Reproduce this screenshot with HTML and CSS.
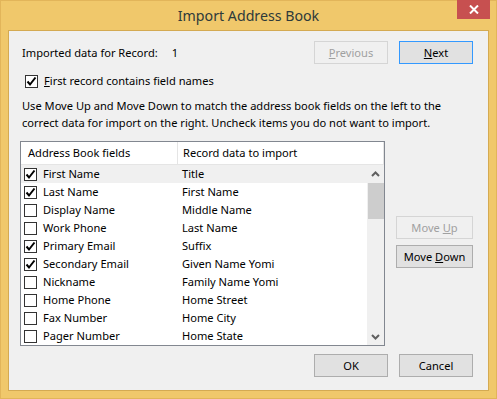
FILE: index.html
```html
<!DOCTYPE html>
<html lang="en">
<head>
  <meta charset="UTF-8">
  <title>Import Address Book</title>
  <link rel="stylesheet" href="styles.css">
</head>
<body>
  <div class="window">
    <div class="titlebar">
      <span></span>
      <div class="title">Import Address Book</div>
      <div class="close">
        <svg width="10" height="9" viewBox="0 0 10 9"><path d="M1 0.5 L9 8.5 M9 0.5 L1 8.5" stroke="#fff" stroke-width="2"/></svg>
      </div>
    </div>
    <div class="client">
      <div class="record-row">
        <span class="label">Imported data for Record:</span>
        <span class="num">1</span>
        <button class="btn disabled prev"><u>P</u>revious</button>
        <button class="btn default"><u>N</u>ext</button>
      </div>
      <div class="check-row">
        <span class="cb checked"><svg width="11" height="11" viewBox="0 0 11 11"><path d="M1.5 5.5 L4 8.5 L9.5 1.5" fill="none" stroke="#000" stroke-width="2"/></svg></span>
        <span><u>F</u>irst record contains field names</span>
      </div>
      <p class="hint">Use Move Up and Move Down to match the address book fields on the left to the<br>correct data for import on the right. Uncheck items you do not want to import.</p>
      <div class="main">
        <div class="listbox">
          <div class="list-head">
            <div class="hcol1">Address Book fields</div>
            <div class="hcol2">Record data to import</div>
          </div>
          <div class="list-body">
            <div class="rows">
              <div class="row selected"><span class="col1"><span class="cb checked"><svg width="11" height="11" viewBox="0 0 11 11"><path d="M1.5 5.5 L4 8.5 L9.5 1.5" fill="none" stroke="#000" stroke-width="2"/></svg></span>First Name</span><span class="col2">Title</span></div>
              <div class="row"><span class="col1"><span class="cb checked"><svg width="11" height="11" viewBox="0 0 11 11"><path d="M1.5 5.5 L4 8.5 L9.5 1.5" fill="none" stroke="#000" stroke-width="2"/></svg></span>Last Name</span><span class="col2">First Name</span></div>
              <div class="row"><span class="col1"><span class="cb"></span>Display Name</span><span class="col2">Middle Name</span></div>
              <div class="row"><span class="col1"><span class="cb"></span>Work Phone</span><span class="col2">Last Name</span></div>
              <div class="row"><span class="col1"><span class="cb checked"><svg width="11" height="11" viewBox="0 0 11 11"><path d="M1.5 5.5 L4 8.5 L9.5 1.5" fill="none" stroke="#000" stroke-width="2"/></svg></span>Primary Email</span><span class="col2">Suffix</span></div>
              <div class="row"><span class="col1"><span class="cb checked"><svg width="11" height="11" viewBox="0 0 11 11"><path d="M1.5 5.5 L4 8.5 L9.5 1.5" fill="none" stroke="#000" stroke-width="2"/></svg></span>Secondary Email</span><span class="col2">Given Name Yomi</span></div>
              <div class="row"><span class="col1"><span class="cb"></span>Nickname</span><span class="col2">Family Name Yomi</span></div>
              <div class="row"><span class="col1"><span class="cb"></span>Home Phone</span><span class="col2">Home Street</span></div>
              <div class="row"><span class="col1"><span class="cb"></span>Fax Number</span><span class="col2">Home City</span></div>
              <div class="row"><span class="col1"><span class="cb"></span>Pager Number</span><span class="col2">Home State</span></div>
            </div>
            <div class="scrollbar">
              <div class="arrow"><svg width="9" height="6" viewBox="0 0 9 6"><path d="M1 5 L4.5 1.5 L8 5" fill="none" stroke="#606060" stroke-width="2"/></svg></div>
              <div class="thumb"></div>
              <div class="track"></div>
              <div class="arrow"><svg width="9" height="6" viewBox="0 0 9 6"><path d="M1 1 L4.5 4.5 L8 1" fill="none" stroke="#606060" stroke-width="2"/></svg></div>
            </div>
          </div>
        </div>
        <div class="side">
          <button class="btn wide disabled">Move <u>U</u>p</button>
          <button class="btn wide">Move <u>D</u>own</button>
        </div>
      </div>
      <div class="footer">
        <button class="btn">OK</button>
        <button class="btn">Cancel</button>
      </div>
    </div>
  </div>
</body>
</html>
```

FILE: styles.css
```css
*{
  margin: 0;
  padding: 0;
  box-sizing: border-box;
}
body{
  width: 497px;
  height: 399px;
  overflow: hidden;
  font-family: "Noto Sans", "Open Sans", sans-serif;
  font-size: 11.1px;
  line-height: 16px;
  color: #000;
}
.window{
  width: 497px;
  height: 399px;
  background-color: #f0c86b;
  border: 1px solid #e2b55a;
  display: flex;
  flex-direction: column;
}
.titlebar{
  height: 29px;
  display: grid;
  grid-template-columns: 1fr auto 1fr;
}
.title{
  font-size: 14.2px;
  color: #2e3a3a;
  line-height: 29px;
}
.close{
  justify-self: end;
  width: 33px;
  height: 19px;
  margin-right: 6px;
  margin-top: -1px;
  background-color: #c75050;
  display: flex;
  align-items: center;
  justify-content: center;
}
.client{
  flex: 1;
  margin: 0 7px 7px;
  border: 1px solid #d4aa52;
  background-color: #f0f0f0;
  padding: 0 15px 0 11px;
  display: flex;
  flex-direction: column;
}
.record-row{
  display: flex;
  align-items: center;
  margin-top: 10px;
  height: 23px;
}
.label{
  margin-left: 2px;
}
.num{
  margin-left: 14px;
}
.btn{
  font-family: inherit;
  font-size: 11.1px;
  width: 74px;
  height: 23px;
  background-color: #e1e1e1;
  border: 1px solid #adadad;
  color: #000;
}
.btn.wide{
  width: 77px;
}
.btn.disabled{
  background-color: #f0f0f0;
  border-color: #d5d5d5;
  color: #a0a0a0;
}
.btn.default{
  border-color: #3399ff;
}
.prev{
  margin-left: auto;
  margin-right: 11px;
}
.check-row{
  display: flex;
  align-items: center;
  margin-top: 10px;
  margin-left: 5px;
  height: 14px;
}
.cb{
  width: 13px;
  height: 13px;
  border: 1px solid #333;
  background-color: #fff;
  margin-right: 6px;
  display: flex;
  flex-shrink: 0;
}
.hint{
  margin-top: 9px;
  margin-left: 2px;
  line-height: 17px;
}
.main{
  display: flex;
  margin-top: 10px;
  gap: 11px;
}
.listbox{
  width: 365px;
  height: 205px;
  border: 1px solid #828790;
  background-color: #fff;
}
.list-head{
  display: flex;
  height: 23px;
  line-height: 22px;
  border-bottom: 1px solid #e5e5e5;
  border-right: 1px solid #e5e5e5;
}
.hcol1{
  width: 157px;
  padding-left: 7px;
  border-right: 1px solid #e5e5e5;
}
.hcol2{
  padding-left: 5px;
}
.list-body{
  display: flex;
  height: 180px;
}
.rows{
  flex: 1;
}
.row{
  display: flex;
  align-items: center;
  height: 18px;
  padding-left: 3px;
}
.row.selected{
  background-color: #f0f0f0;
}
.col1{
  width: 158px;
  display: flex;
  align-items: center;
}
.scrollbar{
  width: 17px;
  background-color: #f0f0f0;
  display: flex;
  flex-direction: column;
}
.arrow{
  height: 17px;
  display: flex;
  align-items: center;
  justify-content: center;
}
.thumb{
  height: 36px;
  margin: 1px 0 0 1px;
  background-color: #cdcdcd;
}
.track{
  flex: 1;
}
.side{
  display: flex;
  flex-direction: column;
  gap: 6px;
  margin-top: 75px;
}
.footer{
  display: flex;
  justify-content: flex-end;
  gap: 11px;
  margin-top: 8px;
}
```
